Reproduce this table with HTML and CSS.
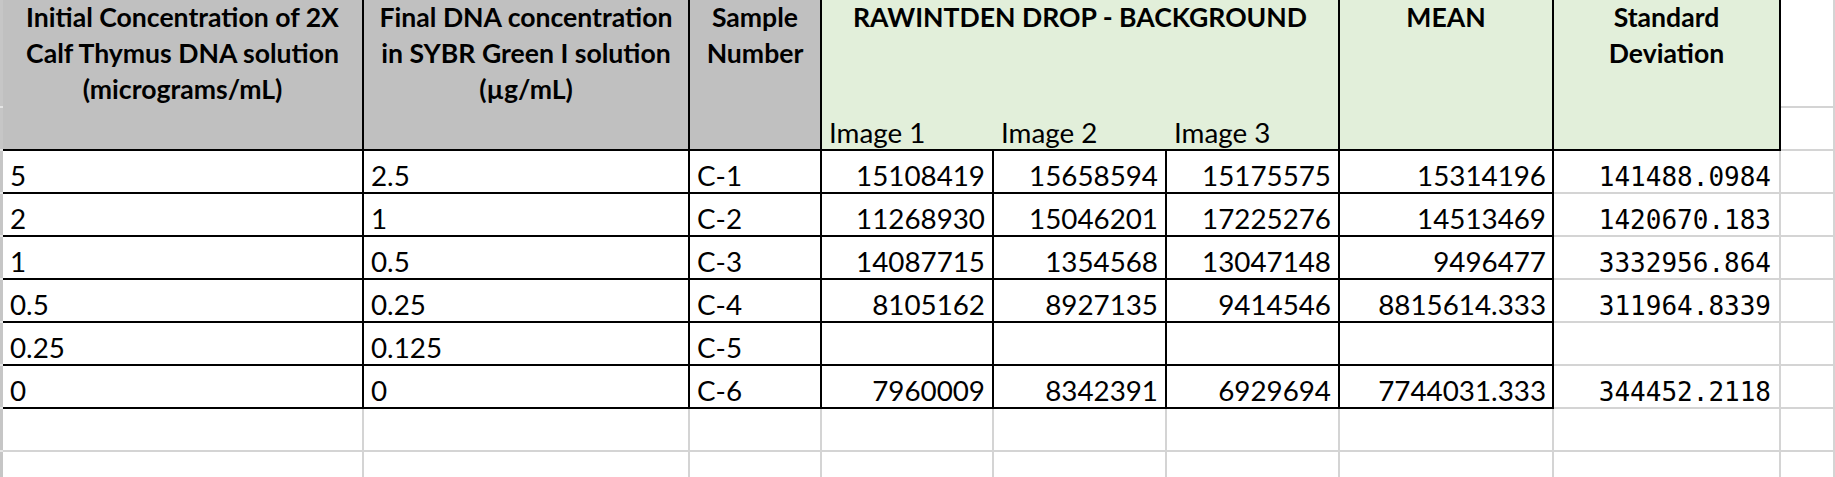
FILE: index.html
```html
<!DOCTYPE html>
<html>
<head>
<meta charset="utf-8">
<link rel="stylesheet" href="styles.css">
</head>
<body>
<div class="sheet">
  <div class="rh"></div>
  <div class="h gray"><div class="ht">Initial Concentration of 2X<br>Calf Thymus DNA solution<br>(micrograms/mL)</div></div>
  <div class="h gray"><div class="ht">Final DNA concentration<br>in SYBR Green I solution<br>(µg/mL)</div></div>
  <div class="h gray"><div class="ht">Sample<br>Number</div></div>
  <div class="h green group"><div class="ht">RAWINTDEN DROP - BACKGROUND</div></div>
  <div class="h green"><div class="ht">MEAN</div></div>
  <div class="h green"><div class="ht">Standard<br>Deviation</div></div>
  <div class="e"></div>

  <div class="rh"></div>
  <div class="sub">Image 1</div>
  <div class="sub">Image 2</div>
  <div class="sub sub-last">Image 3</div>
  <div class="e"></div>

  <div class="rh"></div>
  <div class="c">5</div><div class="c">2.5</div><div class="c">C-1</div>
  <div class="c r">15108419</div><div class="c r">15658594</div><div class="c r">15175575</div>
  <div class="c r m">15314196</div><div class="sd">141488.0984</div><div class="e"></div>

  <div class="rh"></div>
  <div class="c">2</div><div class="c">1</div><div class="c">C-2</div>
  <div class="c r">11268930</div><div class="c r">15046201</div><div class="c r">17225276</div>
  <div class="c r m">14513469</div><div class="sd">1420670.183</div><div class="e"></div>

  <div class="rh"></div>
  <div class="c">1</div><div class="c">0.5</div><div class="c">C-3</div>
  <div class="c r">14087715</div><div class="c r">1354568</div><div class="c r">13047148</div>
  <div class="c r m">9496477</div><div class="sd">3332956.864</div><div class="e"></div>

  <div class="rh"></div>
  <div class="c">0.5</div><div class="c">0.25</div><div class="c">C-4</div>
  <div class="c r">8105162</div><div class="c r">8927135</div><div class="c r">9414546</div>
  <div class="c r m">8815614.333</div><div class="sd">311964.8339</div><div class="e"></div>

  <div class="rh"></div>
  <div class="c">0.25</div><div class="c">0.125</div><div class="c">C-5</div>
  <div class="c r"></div><div class="c r"></div><div class="c r"></div>
  <div class="c r m"></div><div class="sd"></div><div class="e"></div>

  <div class="rh"></div>
  <div class="c">0</div><div class="c">0</div><div class="c">C-6</div>
  <div class="c r">7960009</div><div class="c r">8342391</div><div class="c r">6929694</div>
  <div class="c r m">7744031.333</div><div class="sd">344452.2118</div><div class="e"></div>

  <div class="rh"></div>
  <div class="e"></div><div class="e"></div><div class="e"></div><div class="e"></div><div class="e"></div>
  <div class="e"></div><div class="e"></div><div class="e"></div><div class="e"></div>

  <div class="rh"></div>
  <div class="e"></div><div class="e"></div><div class="e"></div><div class="e"></div><div class="e"></div>
  <div class="e"></div><div class="e"></div><div class="e"></div><div class="e"></div>
</div>
</body>
</html>
```

FILE: styles.css
```css
html, body {
  margin: 0;
  padding: 0;
  background: #ffffff;
  overflow: hidden;
}

.sheet {
  display: grid;
  grid-template-columns: 3px 361px 326px 132px 172px 173px 173px 214px 227px 54px;
  grid-template-rows: 108px 43px repeat(8, 43px);
  font-family: "Lato", "Open Sans", sans-serif;
  font-size: 27.8px;
  color: #000000;
}

.sheet > div {
  box-sizing: border-box;
  min-width: 0;
  white-space: nowrap;
}

.rh {
  background: #c6c6c6;
  border-bottom: 2px solid #e4e4e4;
}

.h {
  grid-row: span 2;
  border-right: 2px solid #000000;
  border-bottom: 2px solid #000000;
  font-weight: 700;
  font-size: 26.6px;
  text-align: center;
  line-height: 36px;
}

.ht {
  margin-top: -1px;
}

.gray {
  background: #c0c0c0;
}

.green {
  background: #e2efda;
}

.group {
  grid-row: auto;
  grid-column: span 3;
  border-bottom: none;
}

.sub {
  background: #e2efda;
  border-bottom: 2px solid #000000;
  display: flex;
  align-items: flex-end;
  padding: 0 7px 1px;
  line-height: 30px;
}

.sub-last {
  border-right: 2px solid #000000;
}

.c {
  border-right: 2px solid #000000;
  border-bottom: 2px solid #000000;
  display: flex;
  align-items: flex-end;
  padding: 0 7px 1px;
  line-height: 30px;
}

.r {
  justify-content: flex-end;
}

.m {
  padding-right: 6px;
}

.sd {
  border-right: 2px solid #d4d4d4;
  border-bottom: 2px solid #d4d4d4;
  display: flex;
  align-items: flex-end;
  justify-content: flex-end;
  padding: 0 8px 0 0;
  line-height: 30px;
  font-family: "DejaVu Sans Mono", monospace;
  font-size: 26px;
}

.e {
  border-right: 2px solid #d4d4d4;
  border-bottom: 2px solid #d4d4d4;
}
```
